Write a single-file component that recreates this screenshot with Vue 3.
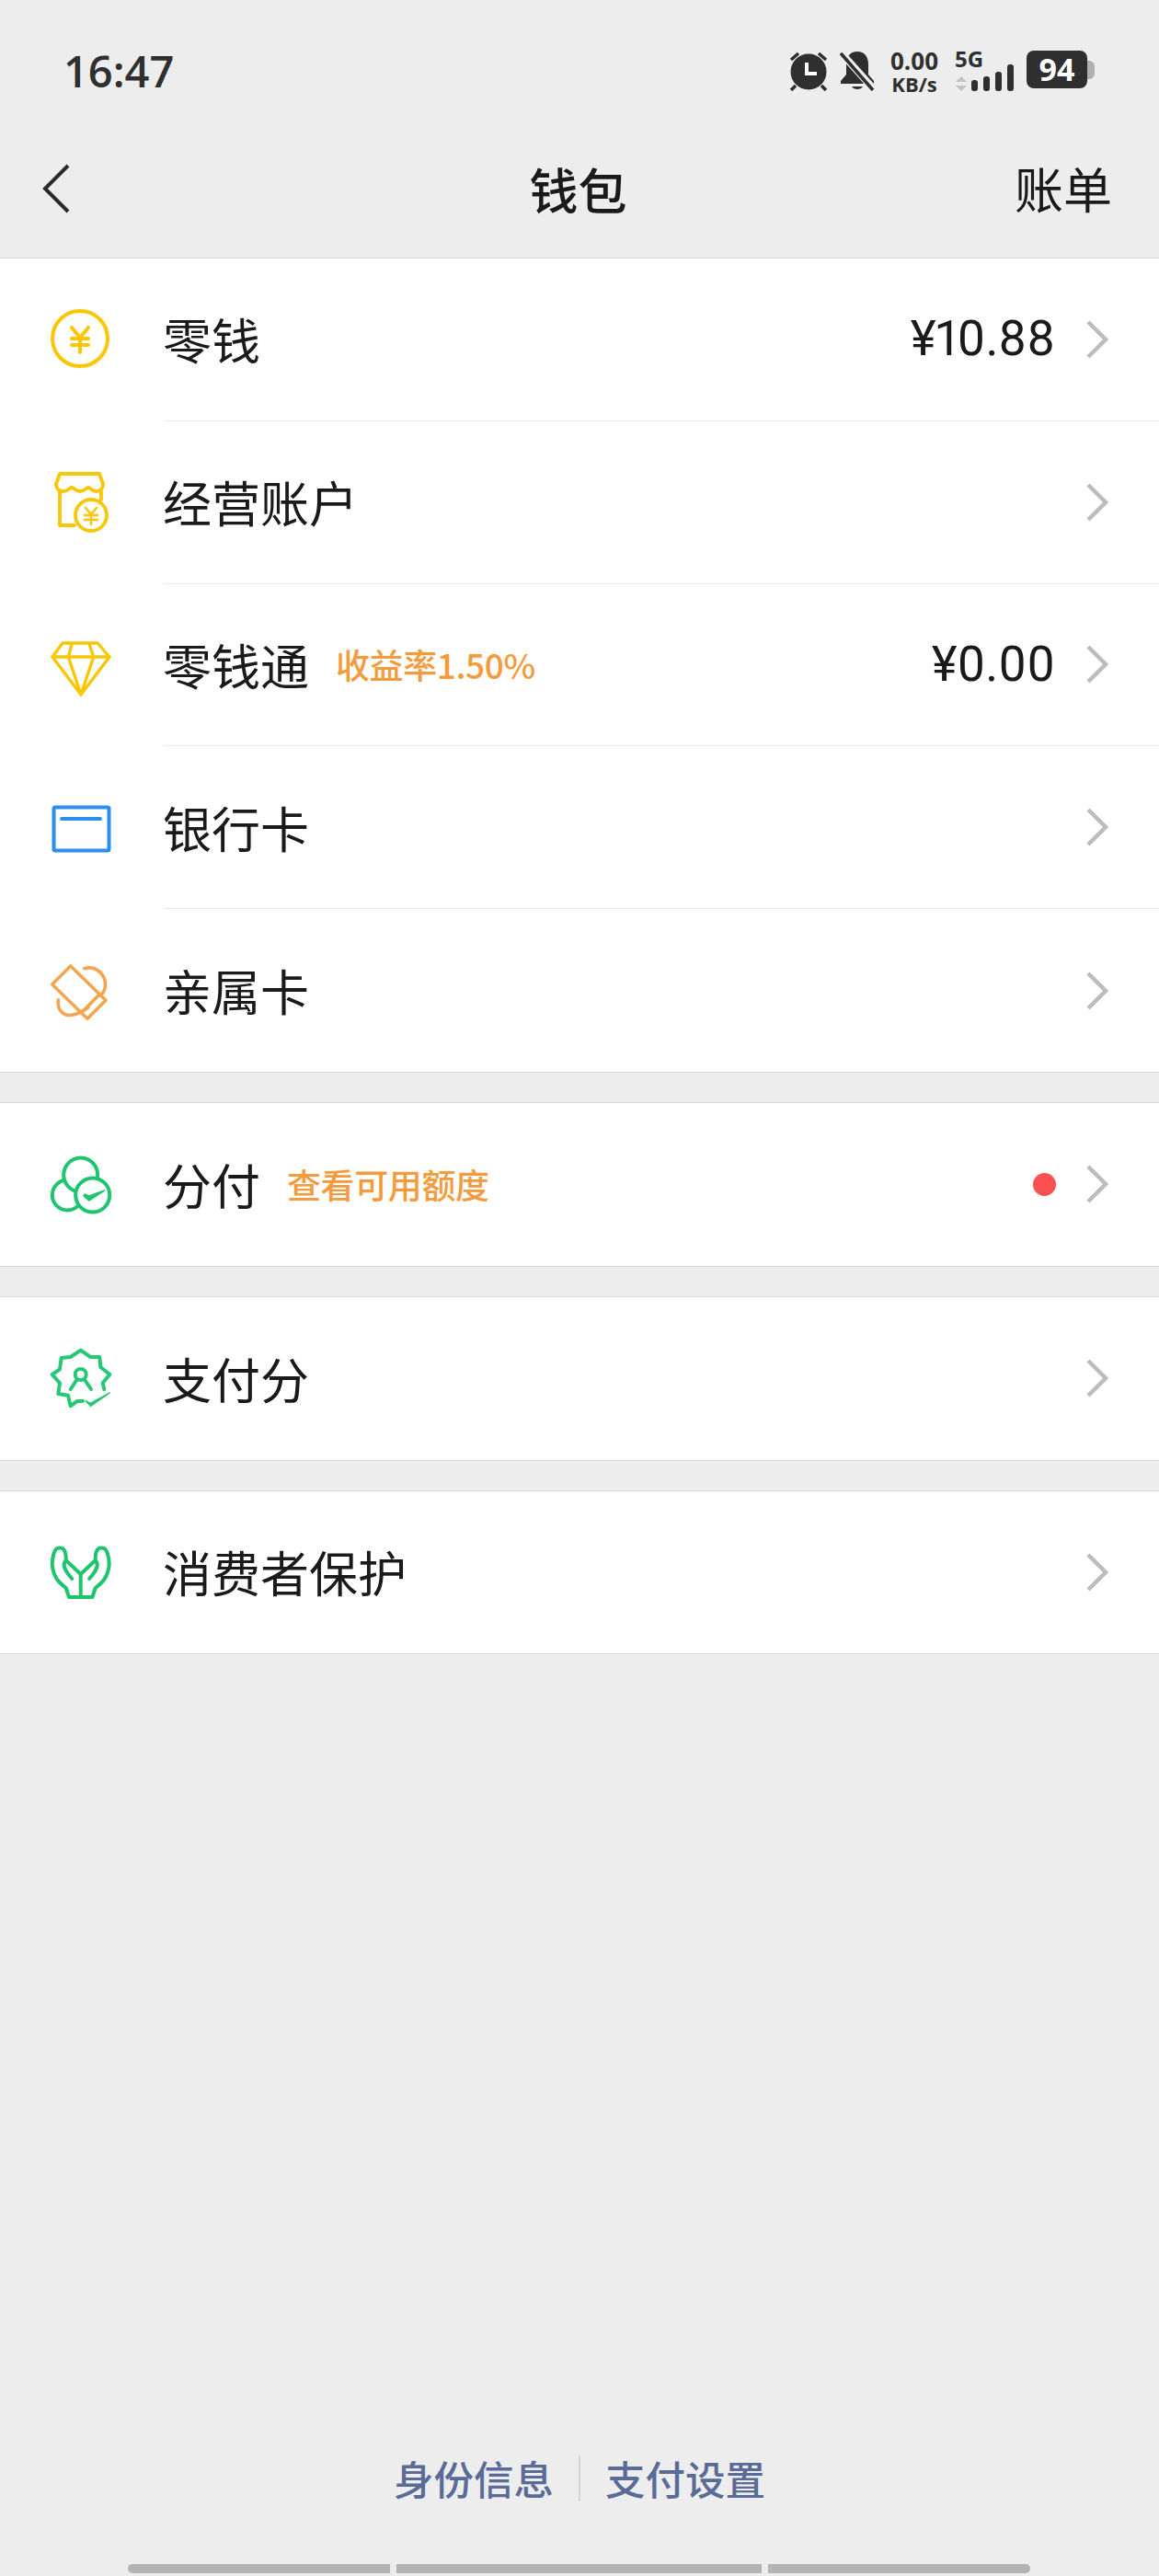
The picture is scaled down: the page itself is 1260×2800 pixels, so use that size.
<script setup>
const groups = [
  [
    { id: "coin", label: "零钱", amount: "¥10.88" },
    { id: "store", label: "经营账户" },
    { id: "gem", label: "零钱通", tag: "收益率1.50%", amount: "¥0.00" },
    { id: "card", label: "银行卡" },
    { id: "family", label: "亲属卡" },
  ],
  [{ id: "fenfu", label: "分付", tag: "查看可用额度", dot: true }],
  [{ id: "score", label: "支付分" }],
  [{ id: "hands", label: "消费者保护" }],
];
const bars = [12, 16, 21, 29];
</script>

<template>
  <div class="page">
    <header class="status">
      <span class="time">16:47</span>
      <div class="status-right">
        <svg class="st-alarm" width="44" height="44" viewBox="0 0 44 44">
          <circle cx="22" cy="23" r="19.5" fill="#2f2f2f" />
          <path d="M3 10 11 3M41 10 33 3M8 38 3 43M36 38 41 43" stroke="#2f2f2f" stroke-width="3.5" fill="none" />
          <path d="M20 13V25H31" stroke="#fff" stroke-width="4" fill="none" />
        </svg>
        <svg class="st-bell" width="38" height="44" viewBox="0 0 38 44">
          <path d="M19 1C11 1 7 7 7 15V26L1 33V36H37V33L31 26V15C31 7 27 1 19 1Z" fill="#2f2f2f" />
          <path d="M13 39C15 43 23 43 25 39Z" fill="#2f2f2f" />
          <path d="M1 2 37 42" stroke="#ededed" stroke-width="8" />
          <path d="M1 3 36 43" stroke="#2f2f2f" stroke-width="3.5" />
        </svg>
        <div class="speed">
          <span class="speed-num">0.00</span>
          <span class="speed-unit">KB/s</span>
        </div>
        <div class="signal">
          <span class="five-g">5G</span>
          <svg class="arrows" width="12" height="16" viewBox="0 0 12 16">
            <path d="M6 0 12 6H0Z" fill="#c4c4c4" />
            <path d="M6 16 12 10H0Z" fill="#c4c4c4" />
          </svg>
          <div class="bars">
            <i v-for="h in bars" :key="h" :style="{ height: h + 'px' }"></i>
          </div>
        </div>
        <div class="battery">
          <span class="battery-body">94</span>
          <span class="battery-tip"></span>
        </div>
      </div>
    </header>

    <nav class="topbar">
      <svg class="back" width="30" height="54" viewBox="0 0 30 54">
        <path d="M28 2 3 27 28 52" fill="none" stroke="#2b2b2b" stroke-width="4" />
      </svg>
      <h1>钱包</h1>
      <span class="bill">账单</span>
    </nav>

    <main class="list">
      <section v-for="(group, g) in groups" :key="g" class="group">
        <div v-for="item in group" :key="item.id" class="row">
          <svg class="icon" width="72" height="72" viewBox="0 0 72 72" fill="none" stroke-linecap="round" stroke-linejoin="round">
            <g v-if="item.id === 'coin'" stroke="#fcc603" stroke-width="4">
              <circle cx="36" cy="35" r="30" />
              <path d="M27 23 36 34 45 23M27 35H45M27 42H45M36 34V50" />
            </g>
            <g v-else-if="item.id === 'store'" stroke="#f8c706" stroke-width="3.8">
              <path d="M14 5H57L61 16C61 22 57 24 53 24 49 24 47 20 45 20 43 20 41 24 36 24 31 24 29 20 27 20 25 20 23 24 18 24 14 24 10 22 10 16Z" />
              <path d="M14 24V61H30" />
              <path d="M59 24V33" />
              <circle cx="48" cy="50" r="17" fill="#fff" />
              <path stroke-width="2.5" d="M42 42 48 49 54 42M41 50H55M41 55H55M48 49V60" />
            </g>
            <g v-else-if="item.id === 'gem'" stroke="#f8c706" stroke-width="3.4">
              <path d="M17 12H55L68 27 37 68 6 27Z" />
              <path d="M6 27H68M27.3 12 23.3 27 37 68 50.7 27 45.7 12" />
            </g>
            <g v-else-if="item.id === 'card'" stroke="#2a8ff0" stroke-width="4">
              <rect x="7.5" y="13.5" width="60" height="47" rx="1.5" />
              <path d="M16 26H58" />
            </g>
            <g v-else-if="item.id === 'family'" stroke="#f3a650" stroke-width="3.6">
              <path d="M25.7 9 5.7 29 44 66.3 64 46.3Z" />
              <path d="M57.3 39.7 38.3 59" />
              <path d="M40.7 11.7C55.7 7.3 67.3 22.3 62.3 35.7 60 40 58 41 57 41" />
              <path d="M12.3 45.7C11 56 17 63 25 62.5 32 62 37 60 45 54" />
            </g>
            <g v-else-if="item.id === 'fenfu'" stroke="#1fc46e" stroke-width="4">
              <circle cx="22.3" cy="48" r="16.5" />
              <circle cx="36.7" cy="26" r="18.5" fill="#fff" />
              <circle cx="49.7" cy="48" r="18.5" fill="#fff" />
              <path d="M40 49 45.7 54 62.3 43 46 49 41 47Z" fill="#1fc46e" stroke-width="1.5" />
            </g>
            <g v-else-if="item.id === 'score'" stroke="#27c774" stroke-width="4">
              <path d="M62.3 48 60.7 41.3 68.3 32 58.3 24 57.3 13 47.3 13 36.7 5.7 25.7 13 15.7 14 14 26.3 5.7 32 14 41.3 12.3 53 23 54.7 25.7 66.3 32.3 61.3 39 60.7" />
              <circle cx="36.7" cy="32" r="6" />
              <path d="M32.3 38 25.7 48M41.3 38 48 48" />
              <path d="M42.3 60.7 47.3 63.5 68.3 52 47.5 66.3Z" fill="#27c774" stroke-width="1.5" />
            </g>
            <g v-else stroke="#1fc46e" stroke-width="4">
              <path d="M36.7 63H24L20.7 53C13 47 7.3 42 5.7 28 5.7 20 8 10 12.3 9.7 18 8.5 21 12 20.7 23L36.7 38" />
              <path d="M20 24C17 28 18.5 33 27.3 43" />
              <path d="M36.7 63H49.4L52.7 53C60.4 47 66.1 42 67.7 28 67.7 20 65.4 10 61.1 9.7 55.4 8.5 52.4 12 52.7 23L36.7 38V63" />
              <path d="M53.4 24C56.4 28 54.9 33 46.1 43" />
            </g>
          </svg>
          <div class="row-body">
            <span class="label">{{ item.label }}</span>
            <span v-if="item.tag" class="tag">{{ item.tag }}</span>
            <span v-if="item.amount" class="amount">{{ item.amount }}</span>
            <span v-if="item.dot" class="dot"></span>
            <svg class="chevron" :class="{ 'after-dot': item.dot }" width="25" height="42" viewBox="0 0 25 42">
              <path d="M3 2 22 21 3 40" fill="none" stroke="#bcbcbc" stroke-width="4.5" />
            </svg>
          </div>
        </div>
      </section>
    </main>

    <footer class="footer">
      <div class="links">
        <span>身份信息</span>
        <i class="divider"></i>
        <span>支付设置</span>
      </div>
      <div class="home-bar">
        <i class="seg seg-a"></i>
        <i class="seg seg-b"></i>
        <i class="seg seg-c"></i>
      </div>
    </footer>
  </div>
</template>

<style>
html,
body {
  margin: 0;
  background: #ededed;
}
</style>

<style scoped>
.page {
  width: 1260px;
  height: 2800px;
  display: flex;
  flex-direction: column;
  background: #ededed;
  color: #1a1a1a;
  font-family: "Noto Sans CJK SC", "Noto Sans", sans-serif;
  overflow: hidden;
}

.status {
  height: 130px;
  box-sizing: border-box;
  padding: 55px 70px 0 69px;
  display: flex;
  justify-content: space-between;
  align-items: flex-start;
  flex-shrink: 0;
}

.time {
  font-family: "Open Sans", sans-serif;
  font-size: 47px;
  font-weight: 600;
  line-height: 44px;
  color: #2f2f2f;
}

.status-right {
  display: flex;
  align-items: flex-start;
  color: #2f2f2f;
}

.st-bell {
  margin-left: 12px;
}

.speed {
  margin: -2px 0 0 16px;
  width: 54px;
  display: flex;
  flex-direction: column;
  align-items: center;
  font-family: "Open Sans", sans-serif;
  font-weight: 700;
}

.speed-num {
  font-size: 26px;
  line-height: 26px;
}

.speed-unit {
  font-size: 22px;
  line-height: 24px;
}

.signal {
  margin-left: 18px;
  width: 64px;
  height: 44px;
  position: relative;
}

.five-g {
  position: absolute;
  left: -1px;
  top: 0;
  font-family: "Open Sans", sans-serif;
  font-size: 24px;
  font-weight: 700;
  line-height: 17px;
}

.arrows {
  position: absolute;
  left: 0;
  bottom: 0;
}

.bars {
  position: absolute;
  left: 17px;
  right: 0;
  bottom: 0;
  display: flex;
  align-items: flex-end;
  gap: 6px;
}

.bars i {
  width: 7px;
  border-radius: 3px;
  background: #2f2f2f;
}

.battery {
  margin-left: 13px;
  display: flex;
  align-items: center;
}

.battery-body {
  width: 66px;
  height: 41px;
  border-radius: 8px;
  background: #2f2f2f;
  color: #fff;
  font-family: "Open Sans", sans-serif;
  font-size: 34px;
  font-weight: 700;
  line-height: 41px;
  text-align: center;
}

.battery-tip {
  width: 8px;
  height: 20px;
  border-radius: 0 6px 6px 0;
  background: #b0b0b0;
}

.topbar {
  height: 150px;
  flex-shrink: 0;
  display: flex;
  align-items: center;
  justify-content: center;
  position: relative;
}

.back {
  position: absolute;
  left: 46px;
  top: 48px;
}

.topbar h1 {
  margin: 0 3px 0 0;
  font-size: 53px;
  font-weight: 500;
  line-height: 1;
}

.bill {
  position: absolute;
  right: 51px;
  top: 48px;
  font-size: 53px;
  line-height: 1;
  color: #1a1a1a;
}

.list {
  display: flex;
  flex-direction: column;
  gap: 32px;
}

.group {
  background: #fff;
  border-top: 1px solid #d8d8d8;
  border-bottom: 1px solid #d8d8d8;
}

.row {
  display: flex;
  align-items: center;
  padding-left: 51px;
}

.icon {
  flex-shrink: 0;
  margin-right: 55px;
}

.row-body {
  flex: 1;
  height: 176.8px;
  box-sizing: border-box;
  display: flex;
  align-items: center;
  padding-right: 55px;
  border-bottom: 1px solid #e8e8e8;
}

.row:last-child .row-body {
  border-bottom: none;
}

.label {
  margin-left: -1px;
  font-size: 53px;
  line-height: 1;
}

.tag {
  margin-left: 29px;
  font-size: 37px;
  font-weight: 500;
  letter-spacing: -0.4px;
  color: #f39c3d;
  line-height: 1;
}

.amount {
  margin-left: auto;
  font-family: Roboto, sans-serif;
  font-variant-numeric: proportional-nums;
  font-size: 53px;
  line-height: 1;
}

.dot {
  margin-left: auto;
  width: 25px;
  height: 25px;
  border-radius: 50%;
  background: #fa5151;
}

.chevron {
  margin-left: 33px;
  flex-shrink: 0;
}

.chevron.after-dot {
  margin-left: 32px;
}

.row-body .label + .chevron {
  margin-left: auto;
}

.footer {
  margin-top: auto;
  flex-shrink: 0;
}

.links {
  display: flex;
  justify-content: center;
  align-items: center;
  gap: 27px;
  height: 50px;
  font-size: 43.5px;
  font-weight: 500;
  line-height: 1;
  color: #5a6b97;
}

.divider {
  width: 2px;
  height: 50px;
  background: #d5d5d5;
}

.home-bar {
  margin-top: 68px;
  padding: 0 140px 3px 139px;
  display: flex;
  gap: 7px;
}

.seg {
  height: 10px;
  background: #b4b4b4;
}

.seg-a {
  width: 285px;
  border-radius: 5px 0 0 5px;
}

.seg-b {
  width: 397px;
}

.seg-c {
  width: 285px;
  border-radius: 0 5px 5px 0;
}
</style>
